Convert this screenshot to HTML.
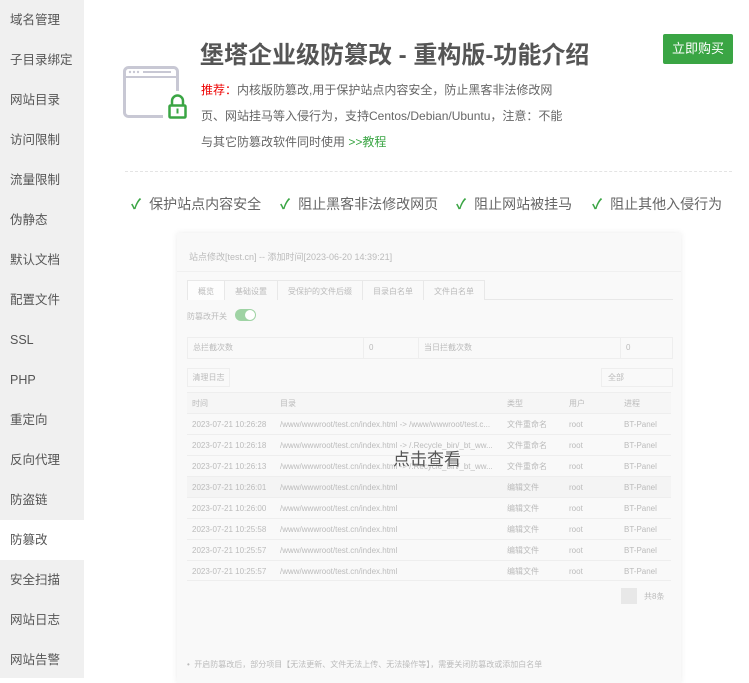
<!DOCTYPE html>
<html><head><meta charset="utf-8"><style>
*{margin:0;padding:0;box-sizing:border-box}
body{width:749px;height:678px;overflow:hidden;background:#fff;font-family:"Liberation Sans","Noto Sans CJK SC",sans-serif;position:relative}
.side{position:absolute;left:0;top:0;width:84px;height:678px;background:#f0f0f0}
.side div{height:40px;line-height:40px;padding-left:10px;font-size:12.5px;color:#555}
.side div.on{background:#fff}
.abs{position:absolute}
.t{left:200px;top:35px;font-size:24px;font-weight:bold;color:#555}
.buy{left:663px;top:34px;width:70px;height:30px;background:#3aa544;color:#fff;font-size:13px;line-height:30px;text-align:center;border-radius:2px}
.desc{left:201px;top:77px;width:368px;font-size:12px;color:#666;line-height:26px}
.hr{left:125px;top:171px;width:607px;border-top:1px dashed #e4e4e4}
.feat{top:194px;font-size:14px;color:#666}
.feat b{color:#3aa544;font-weight:bold;margin-right:8px}
.shot{left:177px;top:233px;width:504px;height:450px;background:#f9f9f9;box-shadow:0 0 6px rgba(0,0,0,.08);font-size:8px;color:#bbb}
.shot .r{position:absolute;left:10px;width:484px;height:21px;border-top:1px solid #eee;line-height:21px}
.shot .r span{position:absolute}
</style></head><body>
<div class="side">
<div>域名管理</div><div>子目录绑定</div><div>网站目录</div><div>访问限制</div><div>流量限制</div><div>伪静态</div><div>默认文档</div><div>配置文件</div><div>SSL</div><div>PHP</div><div>重定向</div><div>反向代理</div><div>防盗链</div><div class="on">防篡改</div><div>安全扫描</div><div>网站日志</div><div>网站告警</div>
</div>
<svg class="abs" style="left:118px;top:60px" width="75" height="65" viewBox="0 0 75 65">
<rect x="6.5" y="7.5" width="53" height="49" rx="4" fill="none" stroke="#c8c8d4" stroke-width="3"/>
<line x1="6" y1="17" x2="60" y2="17" stroke="#c8c8d4" stroke-width="2"/>
<circle cx="12" cy="12" r="1.2" fill="#c8c8d4"/><circle cx="16" cy="12" r="1.2" fill="#c8c8d4"/><circle cx="20" cy="12" r="1.2" fill="#c8c8d4"/>
<line x1="25" y1="12" x2="53" y2="12" stroke="#c8c8d4" stroke-width="2"/>
<rect x="45" y="31" width="28" height="32" fill="#fff"/>
<path d="M54 45v-4a5.5 5.5 0 0 1 11 0v4" fill="none" stroke="#3aa544" stroke-width="2.5"/>
<rect x="51.5" y="45.5" width="16" height="12" rx="1" fill="none" stroke="#3aa544" stroke-width="2.5"/>
<rect x="58.5" y="48.5" width="2" height="5" fill="#3aa544"/>
</svg>
<div class="abs t">堡塔企业级防篡改 - 重构版-功能介绍</div>
<div class="abs buy">立即购买</div>
<div class="abs desc"><span style="color:#e00">推荐：</span>内核版防篡改,用于保护站点内容安全，防止黑客非法修改网页、网站挂马等入侵行为，支持Centos/Debian/Ubuntu，注意：不能与其它防篡改软件同时使用 <span style="color:#3aa544">&gt;&gt;教程</span></div>
<div class="abs hr"></div>
<div class="abs feat" style="left:131px"><b>✓</b>保护站点内容安全</div>
<div class="abs feat" style="left:280px"><b>✓</b>阻止黑客非法修改网页</div>
<div class="abs feat" style="left:456px"><b>✓</b>阻止网站被挂马</div>
<div class="abs feat" style="left:592px"><b>✓</b>阻止其他入侵行为</div>
<div class="abs shot">
<div style="position:absolute;left:12px;top:17px;font-size:9px">站点修改[test.cn] -- 添加时间[2023-06-20 14:39:21]</div>
<div style="position:absolute;left:0;top:38px;width:504px;border-top:1px solid #f0f0f0"></div>
<div style="position:absolute;left:10px;top:66px;width:486px;border-top:1px solid #e8e8e8"></div>
<div style="position:absolute;left:10px;top:47px;height:20px;display:flex;border:1px solid #e8e8e8;border-bottom:none;background:#f9f9f9">
<span style="padding:5px 10px;background:#fdfdfd">概览</span><span style="padding:5px 10px;border-left:1px solid #e8e8e8">基础设置</span><span style="padding:5px 10px;border-left:1px solid #e8e8e8">受保护的文件后缀</span><span style="padding:5px 10px;border-left:1px solid #e8e8e8">目录白名单</span><span style="padding:5px 10px;border-left:1px solid #e8e8e8">文件白名单</span></div>
<div style="position:absolute;left:10px;top:78px">防篡改开关</div>
<div style="position:absolute;left:58px;top:76px;width:21px;height:12px;border-radius:6px;background:#9fd3a4"><div style="position:absolute;right:1px;top:1px;width:10px;height:10px;border-radius:5px;background:#fff"></div></div>
<div style="position:absolute;left:10px;top:104px;width:486px;height:22px;border:1px solid #eee;line-height:20px"><span style="position:absolute;left:5px">总拦截次数</span><span style="position:absolute;left:175px;border-left:1px solid #eee;padding-left:5px;height:20px;width:55px">0</span><span style="position:absolute;left:230px;border-left:1px solid #eee;padding-left:5px">当日拦截次数</span><span style="position:absolute;left:432px;border-left:1px solid #eee;padding-left:5px;height:20px">0</span></div>
<div style="position:absolute;left:10px;top:135px;width:43px;height:19px;border:1px solid #eee;line-height:17px;text-align:center">清理日志</div>
<div style="position:absolute;left:424px;top:135px;width:72px;height:19px;border:1px solid #eee;line-height:17px;padding-left:6px">全部</div>
<div class="r" style="top:159px;background:#f6f6f6"><span style="left:5px">时间</span><span style="left:93px">目录</span><span style="left:320px">类型</span><span style="left:382px">用户</span><span style="left:437px">进程</span></div>
<div class="r" style="top:180px"><span style="left:5px">2023-07-21 10:26:28</span><span style="left:93px">/www/wwwroot/test.cn/index.html -&gt; /www/wwwroot/test.c...</span><span style="left:320px">文件重命名</span><span style="left:382px">root</span><span style="left:437px">BT-Panel</span></div>
<div class="r" style="top:201px"><span style="left:5px">2023-07-21 10:26:18</span><span style="left:93px">/www/wwwroot/test.cn/index.html -&gt; /.Recycle_bin/_bt_ww...</span><span style="left:320px">文件重命名</span><span style="left:382px">root</span><span style="left:437px">BT-Panel</span></div>
<div class="r" style="top:222px"><span style="left:5px">2023-07-21 10:26:13</span><span style="left:93px">/www/wwwroot/test.cn/index.html -&gt; /.Recycle_bin/_bt_ww...</span><span style="left:320px">文件重命名</span><span style="left:382px">root</span><span style="left:437px">BT-Panel</span></div>
<div class="r" style="top:243px;background:#f4f4f4"><span style="left:5px">2023-07-21 10:26:01</span><span style="left:93px">/www/wwwroot/test.cn/index.html</span><span style="left:320px">编辑文件</span><span style="left:382px">root</span><span style="left:437px">BT-Panel</span></div>
<div class="r" style="top:264px"><span style="left:5px">2023-07-21 10:26:00</span><span style="left:93px">/www/wwwroot/test.cn/index.html</span><span style="left:320px">编辑文件</span><span style="left:382px">root</span><span style="left:437px">BT-Panel</span></div>
<div class="r" style="top:285px"><span style="left:5px">2023-07-21 10:25:58</span><span style="left:93px">/www/wwwroot/test.cn/index.html</span><span style="left:320px">编辑文件</span><span style="left:382px">root</span><span style="left:437px">BT-Panel</span></div>
<div class="r" style="top:306px"><span style="left:5px">2023-07-21 10:25:57</span><span style="left:93px">/www/wwwroot/test.cn/index.html</span><span style="left:320px">编辑文件</span><span style="left:382px">root</span><span style="left:437px">BT-Panel</span></div>
<div class="r" style="top:327px;border-bottom:1px solid #eee"><span style="left:5px">2023-07-21 10:25:57</span><span style="left:93px">/www/wwwroot/test.cn/index.html</span><span style="left:320px">编辑文件</span><span style="left:382px">root</span><span style="left:437px">BT-Panel</span></div>
<div style="position:absolute;left:444px;top:355px;width:16px;height:16px;background:#e8e8e8"></div>
<div style="position:absolute;left:467px;top:358px">共8条</div>
<div style="position:absolute;left:10px;top:426px">•&nbsp; 开启防篡改后，部分项目【无法更新、文件无法上传、无法操作等】，需要关闭防篡改或添加白名单</div>
</div>
<div class="abs" style="left:393px;top:445px;font-size:17px;color:#555">点击查看</div>
</body></html>
